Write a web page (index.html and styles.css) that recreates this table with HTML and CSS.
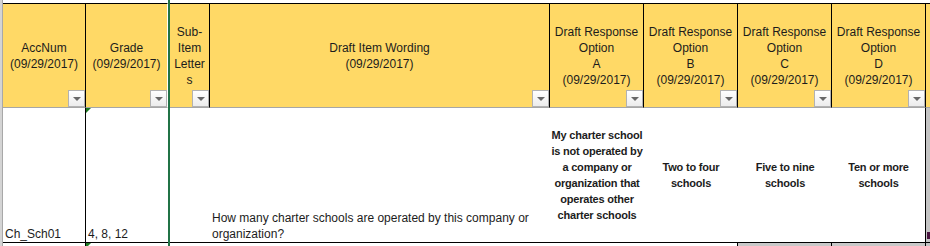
FILE: index.html
```html
<!DOCTYPE html>
<html>
<head>
    <title>Charter School Items</title>
    <link rel="stylesheet" href="styles.css">
</head>
<body>
    <div class="sheet">
        <div class="row strip">
            <div class="gut"></div>
            <div class="sc"></div>
            <div class="sc white-edge"></div>
            <div class="split"></div>
            <div class="sc"></div>
            <div class="sc"></div>
            <div class="sc"></div>
            <div class="sc"></div>
            <div class="sc"></div>
            <div class="sc"></div>
            <div class="sc"></div>
        </div>

        <div class="row head">
            <div class="gut"></div>
            <div class="hd">AccNum<br>(09/29/2017)<span class="filter"></span></div>
            <div class="hd white-edge">Grade<br>(09/29/2017)<span class="filter"></span></div>
            <div class="split"></div>
            <div class="hd">Sub-<br>Item<br>Letter<br>s<span class="filter"></span></div>
            <div class="hd">Draft Item Wording<br>(09/29/2017)<span class="filter"></span></div>
            <div class="hd">Draft Response<br>Option<br>A<br>(09/29/2017)<span class="filter"></span></div>
            <div class="hd">Draft Response<br>Option<br>B<br>(09/29/2017)<span class="filter"></span></div>
            <div class="hd">Draft Response<br>Option<br>C<br>(09/29/2017)<span class="filter"></span></div>
            <div class="hd">Draft Response<br>Option<br>D<br>(09/29/2017)<span class="filter"></span></div>
            <div class="hd-tail"></div>
        </div>

        <div class="row data">
            <div class="gut"></div>
            <div class="cell text ruled">Ch_Sch01</div>
            <div class="cell text flagged">4, 8, 12</div>
            <div class="split"></div>
            <div class="cell"></div>
            <div class="cell text">How many charter schools are operated by this company or<br>organization?</div>
            <div class="cell opt">My charter school<br>is not operated by<br>a company or<br>organization that<br>operates other<br>charter schools</div>
            <div class="cell opt">Two to four<br>schools</div>
            <div class="cell opt">Five to nine<br>schools</div>
            <div class="cell opt ruled">Ten or more<br>schools</div>
            <div class="data-tail"><span class="mark"></span></div>
        </div>

        <div class="row next">
            <div class="gut"></div>
            <div class="nc ruled"></div>
            <div class="nc flagged"></div>
            <div class="split"></div>
            <div class="nc"></div>
            <div class="nc"></div>
            <div class="nc"></div>
            <div class="nc ruled"></div>
            <div class="nc shaded"></div>
            <div class="nc shaded"></div>
            <div class="nc grey"></div>
        </div>
    </div>
</body>
</html>
```

FILE: styles.css
```css
body { margin: 0; background: #fff; font-family: "Liberation Sans", Arial, sans-serif; font-size: 12px; color: #1c1c1c; }
.sheet { width: 930px; height: 246px; overflow: hidden; }

/* every row shares the same column widths */
.row { display: grid; grid-template-columns: 3px 83px 82px 2px 40px 340px 94px 94px 94px 94px 4px; }
.row > div { box-sizing: border-box; }

.gut { background: #d4d4d4; border-right: 1px solid #a8a8a8; }
.split { background: #217346; }
.white-edge { border-right: 1px solid #fff; }

/* cut-off row above the header */
.strip { height: 4px; }
.strip .sc { border-bottom: 1px solid #000; }

/* header */
.head { height: 104px; }
.hd { position: relative; display: flex; align-items: center; justify-content: center; text-align: center; line-height: 16px; background: #ffd966; border-right: 1px solid #000; border-bottom: 1px solid #a6a6a6; }
.hd.white-edge { border-right-color: #fff; }
.hd-tail { background: #ffd966; border-bottom: 1px solid #a6a6a6; }

/* autofilter button */
.filter { position: absolute; right: 0; bottom: 0; width: 17px; height: 17px; box-sizing: border-box; border: 1px solid #b2b2b2; background: linear-gradient(#ffffff, #ececec); }
.filter::after { content: ""; position: absolute; left: 4px; top: 6px; border-left: 4px solid transparent; border-right: 4px solid transparent; border-top: 4px solid #676767; }

/* data row */
.data { height: 135px; }
.cell { position: relative; border-bottom: 1px solid #000; line-height: 16px; }
.cell.text { display: flex; align-items: flex-end; padding: 0 2px; }
.cell.opt { display: flex; align-items: center; justify-content: center; text-align: center; font-weight: bold; font-size: 11px; letter-spacing: -0.2px; }
.ruled { border-right: 1px solid #000; }
.data-tail { position: relative; background: #c4c4c4; border-bottom: 1px solid #000; }
.mark { position: absolute; left: 1px; top: 124px; width: 3px; height: 7px; background: #4a1540; }

/* green error indicator in the corner */
.flagged { position: relative; }
.flagged::before { content: ""; position: absolute; left: 0; top: 0; border-top: 5px solid #1e7b22; border-right: 5px solid transparent; }

/* top of the following row */
.next { height: 3px; }
.shaded { background: #c8c8c8; border-right: 1px solid #000; }
.grey { background: #c4c4c4; }
```
